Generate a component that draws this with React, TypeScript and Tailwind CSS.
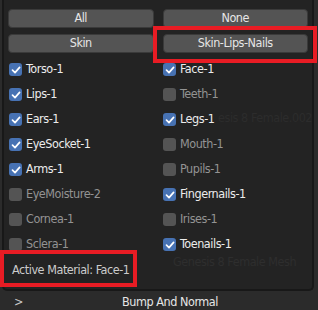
import React from 'react'

type Item = { label: string; checked: boolean }

const left: Item[] = [
    { label: 'Torso-1', checked: true },
    { label: 'Lips-1', checked: true },
    { label: 'Ears-1', checked: true },
    { label: 'EyeSocket-1', checked: true },
    { label: 'Arms-1', checked: true },
    { label: 'EyeMoisture-2', checked: false },
    { label: 'Cornea-1', checked: false },
    { label: 'Sclera-1', checked: false },
]

const right: Item[] = [
    { label: 'Face-1', checked: true },
    { label: 'Teeth-1', checked: false },
    { label: 'Legs-1', checked: true },
    { label: 'Mouth-1', checked: false },
    { label: 'Pupils-1', checked: false },
    { label: 'Fingernails-1', checked: true },
    { label: 'Irises-1', checked: false },
    { label: 'Toenails-1', checked: true },
]

function Check({ item }: { item: Item }) {
    return (
        <div className="h-[25px] flex items-center gap-[4px]">
            {item.checked ? (
                <span className="w-[13px] h-[13px] rounded-[3px] bg-[#4772b3] flex items-center justify-center">
                    <svg width="10" height="10" viewBox="0 0 10 10">
                        <path d="M1.5 5.2 L4 7.6 L8.6 2.4" fill="none" stroke="#fff" strokeWidth="1.7" strokeLinecap="round" strokeLinejoin="round" />
                    </svg>
                </span>
            ) : (
                <span className="w-[13px] h-[13px] rounded-[3px] bg-[#545454]" />
            )}
            <span className={item.checked ? 'text-[#ececec]' : 'text-[#939393]'}>{item.label}</span>
        </div>
    )
}

function Btn({ children }: { children: React.ReactNode }) {
    return (
        <div className="h-[19px] rounded-[4px] bg-[#545454] border border-[#3a3a3a] flex items-center justify-center text-[#e6e6e6]">
            {children}
        </div>
    )
}

export default function App() {
    return (
        <div
            className="relative w-[318px] h-[310px] bg-[#2b2b2b] overflow-hidden text-[12.5px] tracking-[-0.45px] leading-none"
            style={{ fontFamily: '"DejaVu Sans Condensed", "DejaVu Sans", sans-serif' }}
        >
            <div className="relative ml-[2px] w-[312px] h-[291px] rounded-b-[5px] border-2 border-t-0 border-[#181818] bg-[#232323] px-[4px] pt-[9px]">
                {/* faint content of the panel behind the popup */}
                <span className="absolute left-[169px] top-[256px] whitespace-nowrap text-[#2e2e2e]">Genesis 8 Female Mesh</span>
                <span className="absolute left-[214px] top-[112px] whitespace-nowrap text-[#2c2c2c]">esis 8 Female.002</span>
                <div className="grid grid-cols-2 gap-x-[9px] gap-y-[6px]">
                    <Btn>All</Btn>
                    <Btn>None</Btn>
                    <Btn>Skin</Btn>
                    <Btn>Skin-Lips-Nails</Btn>
                </div>
                <div className="relative grid grid-cols-2 gap-x-[9px] mt-[4px] pl-[1px]">
                    <div className="flex flex-col">
                        {left.map((i) => (
                            <Check key={i.label} item={i} />
                        ))}
                    </div>
                    <div className="flex flex-col">
                        {right.map((i) => (
                            <Check key={i.label} item={i} />
                        ))}
                    </div>
                </div>
                <div className="mt-[7px] pl-[4px] text-[#cccccc]">Active Material: Face-1</div>
            </div>
            <div className="flex items-center h-[19px] pt-[3px] text-[#e6e6e6]">
                <span className="w-[122px] pl-[14px] text-[#c8c8c8]">&gt;</span>
                <span>Bump And Normal</span>
            </div>

            {/* annotation boxes */}
            <div className="absolute left-[153px] top-[26px] w-[164px] h-[37px] border-[4px] border-[#e81c24]" />
            <div className="absolute left-0 top-[250px] w-[137px] h-[37px] border-[4px] border-[#e81c24]" />
        </div>
    )
}
